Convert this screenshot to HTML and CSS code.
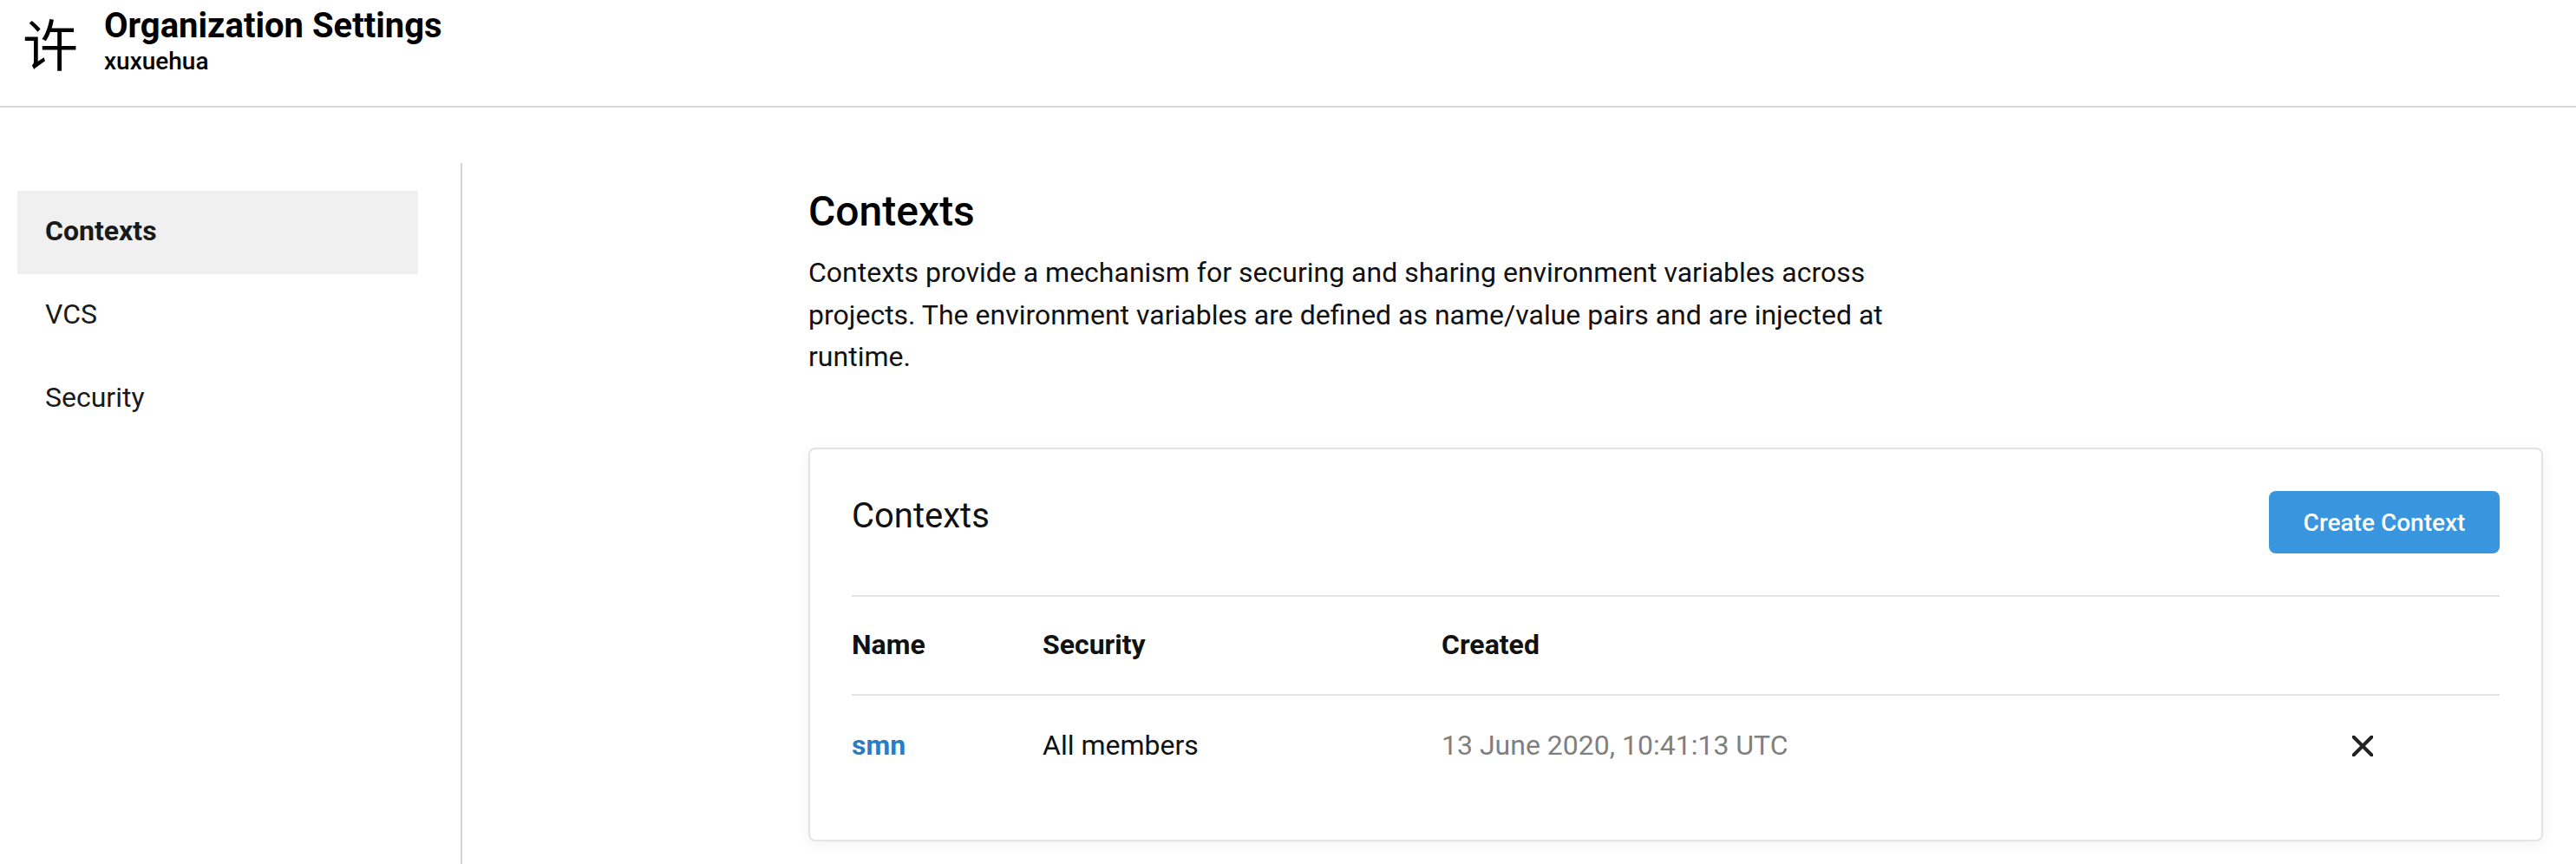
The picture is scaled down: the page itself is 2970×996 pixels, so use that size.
FILE: index.html

```html
<!DOCTYPE html>
<html>
<head>
  <title>Organization Settings</title>
  <link rel="stylesheet" href="styles.css">
</head>
<body>
  <header class="top">
    <div class="logo">许</div>
    <div class="org">
      <div class="org-title">Organization Settings</div>
      <div class="org-name">xuxuehua</div>
    </div>
  </header>
  <div class="page">
    <nav class="side">
      <a class="side-item active">Contexts</a>
      <a class="side-item">VCS</a>
      <a class="side-item">Security</a>
    </nav>
    <main class="main">
      <h1>Contexts</h1>
      <p class="intro">Contexts provide a mechanism for securing and sharing environment variables across projects. The environment variables are defined as name/value pairs and are injected at runtime.</p>
      <section class="card">
        <div class="card-head">
          <h2>Contexts</h2>
          <button class="btn">Create Context</button>
        </div>
        <div class="row row-head">
          <div>Name</div>
          <div>Security</div>
          <div>Created</div>
        </div>
        <div class="row row-body">
          <a class="ctx-link">smn</a>
          <div>All members</div>
          <div class="date">13 June 2020, 10:41:13 UTC</div>
          <svg class="del" viewBox="0 0 24 24" width="24" height="24"><path d="M1.5 1.5 L22.5 22.5 M22.5 1.5 L1.5 22.5" stroke="#222" stroke-width="4" stroke-linecap="round" fill="none"/></svg>
        </div>
      </section>
    </main>
  </div>
</body>
</html>
```

FILE: styles.css

```css
html, body { margin: 0; padding: 0; background: #fff; }
body { width: 2970px; height: 996px; overflow: hidden; font-family: Roboto, "Noto Sans CJK SC", sans-serif; color: #111; font-size: 32px; }

.top { height: 122px; border-bottom: 2px solid #d8d8d8; display: flex; align-items: flex-start; padding-left: 26px; }
.logo { width: 94px; font-family: "Noto Sans CJK SC", sans-serif; font-size: 64px; line-height: 64px; margin-top: 16px; color: #000; }
.org { padding-top: 7px; }
.org-title { font-size: 40px; font-weight: 700; line-height: 46px; color: #000; }
.org-name { font-size: 28px; font-weight: 500; line-height: 36px; color: #000; }

.page { display: flex; height: 872px; padding-top: 64px; box-sizing: border-box; }
.side { flex: none; width: 511px; height: 776px; margin-left: 20px; border-right: 2px solid #d4d4d4; padding-top: 32px; }
.side-item { display: block; width: 462px; height: 96px; line-height: 93px; padding-left: 32px; box-sizing: border-box; color: #1a1a1a; }
.side-item.active { background: #f0f0f0; font-weight: 700; }

.main { margin-left: 399px; width: 2000px; }
h1 { margin: 0; font-size: 48px; font-weight: 500; line-height: 56px; color: #000; padding-top: 28px; }
.intro { margin: 18px 0 0; width: 1250px; line-height: 48.5px; color: #111; }

.card { margin-top: 80.5px; height: 454px; box-sizing: border-box; border: 2px solid #e3e3e3; border-radius: 8px; box-shadow: 0 4px 16px rgba(0,0,0,.05); padding: 48px 48px 0; }
.card-head { display: flex; justify-content: space-between; align-items: flex-start; height: 120px; border-bottom: 2px solid #e3e3e3; }
h2 { margin: 3px 0 0; font-size: 40px; font-weight: 400; line-height: 52px; color: #111; }
.btn { width: 266px; height: 72px; background: #3895de; color: #fff; border: none; border-radius: 8px; font-family: inherit; font-size: 28px; font-weight: 500; }

.row { display: grid; grid-template-columns: 220px 460px 1050px 24px; align-items: center; }
.row-head { height: 112px; border-bottom: 2px solid #e3e3e3; font-weight: 700; color: #111; line-height: 36px; }
.row-head div { margin-top: -3px; }
.row-body { height: 116px; }
.row-body > a, .row-body > div { margin-top: -3px; }
.ctx-link { color: #2b7cc0; font-weight: 700; }
.date { color: #7f7f7f; }
.del { display: block; }
```
